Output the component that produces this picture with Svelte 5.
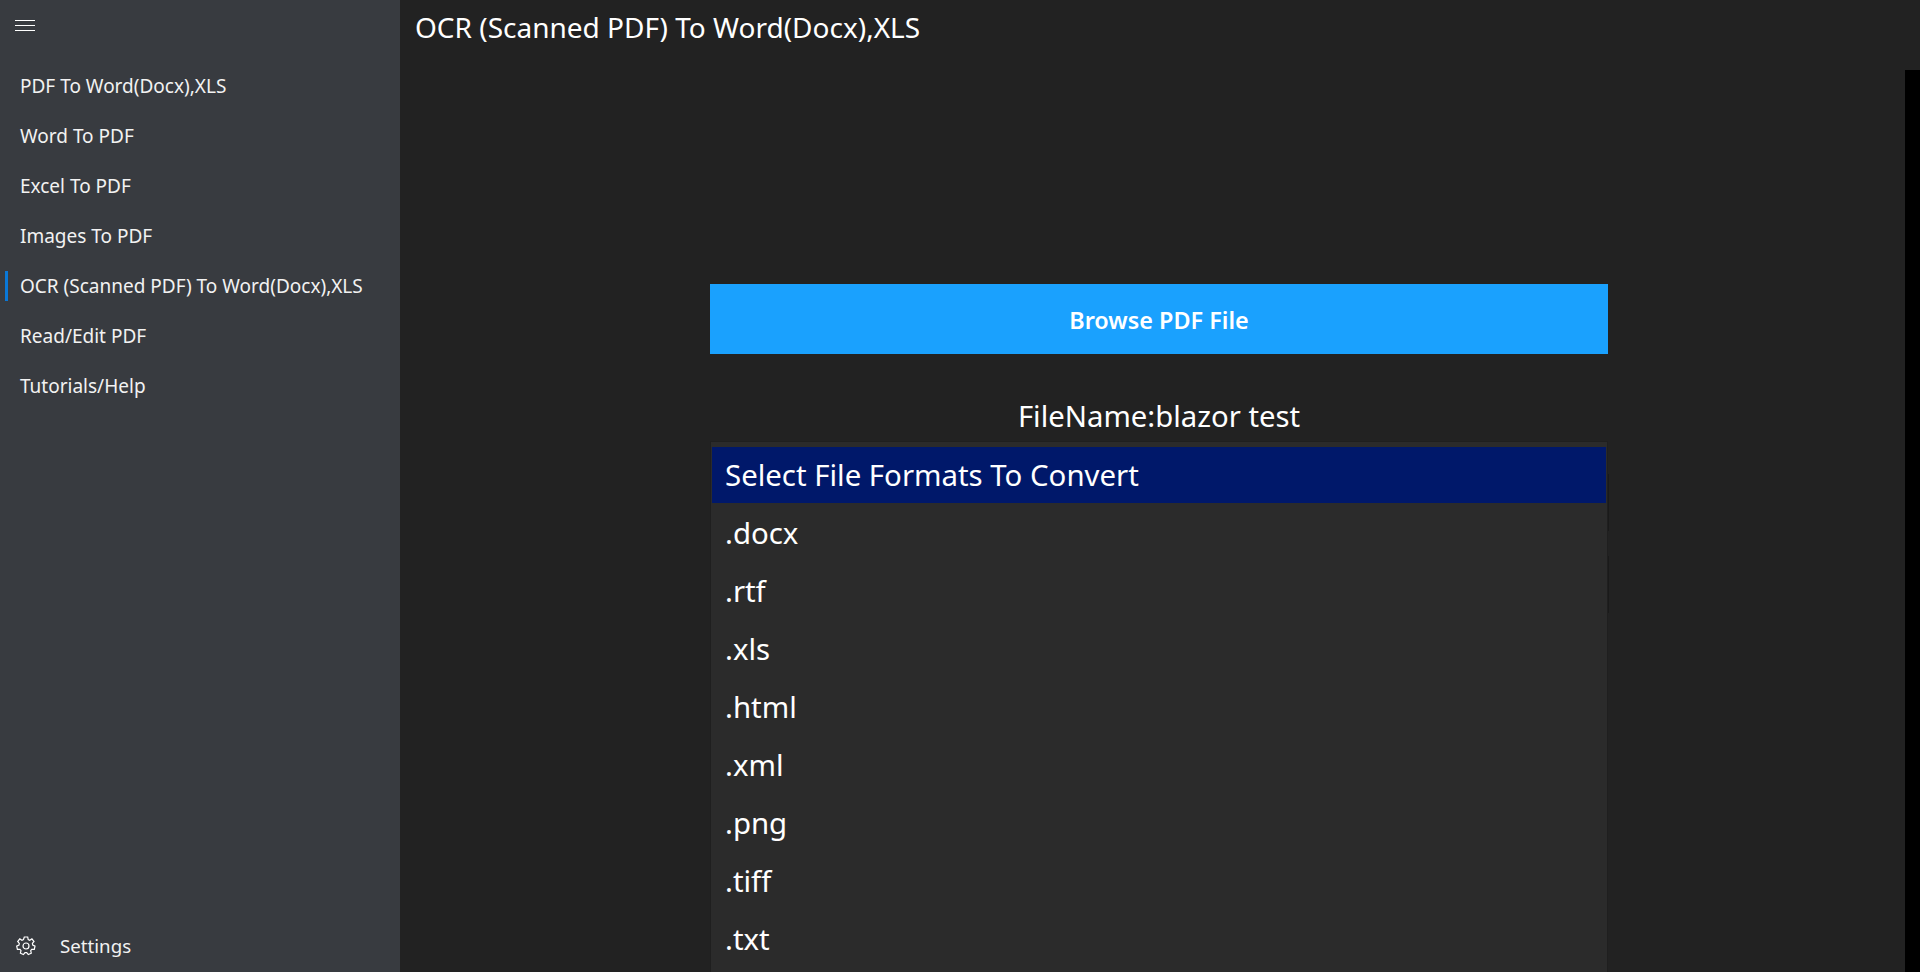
<script>
	const navItems = [
		'PDF To Word(Docx),XLS',
		'Word To PDF',
		'Excel To PDF',
		'Images To PDF',
		'OCR (Scanned PDF) To Word(Docx),XLS',
		'Read/Edit PDF',
		'Tutorials/Help'
	];
	const activeItem = 'OCR (Scanned PDF) To Word(Docx),XLS';
	const formats = ['.docx', '.rtf', '.xls', '.html', '.xml', '.png', '.tiff', '.txt'];
</script>

<div class="shell">
	<aside class="sidebar">
		<button class="menu-btn" aria-label="Menu">
			<span></span><span></span><span></span>
		</button>
		<nav class="nav">
			{#each navItems as item}
				<div class="nav-item" class:active={item === activeItem}>{item}</div>
			{/each}
		</nav>
		<div class="settings">
			<svg width="20" height="20" viewBox="0 0 20 20" fill="none" stroke="#fff" stroke-width="1.2">
				<circle cx="10" cy="10" r="3" />
				<path d="M8.3 1h3.4l.5 2.5 1.5.7 2.2-1.3 2.1 2.6-1.6 1.9.3 1.6 2.3 1.1-.7 3.2-2.6.1-1 1.3.6 2.5-3 1.4-1.6-2h-1.7l-1.6 2-3-1.4.6-2.5-1-1.3-2.6-.1-.7-3.2 2.3-1.1.3-1.6-1.6-1.9 2.1-2.6 2.2 1.3 1.5-.7z" />
			</svg>
			<span class="settings-label">Settings</span>
		</div>
	</aside>

	<main class="main">
		<header class="title">OCR (Scanned PDF) To Word(Docx),XLS</header>
		<div class="body">
			<div class="content">
				<button class="browse">Browse PDF File</button>
				<div class="filename">FileName:blazor test</div>
				<div class="panel">
					<div class="row selected">Select File Formats To Convert</div>
					{#each formats as f}
						<div class="row">{f}</div>
					{/each}
				</div>
			</div>
			<div class="scrollbar"></div>
		</div>
	</main>
</div>

<style>
	:global(body) {
		margin: 0;
		overflow: hidden;
		background: #222222;
	}

	.shell {
		display: flex;
		height: 972px;
		overflow: hidden;
		font-family: "Noto Sans", "Open Sans", sans-serif;
		color: #fff;
	}

	.sidebar {
		width: 400px;
		flex: none;
		display: flex;
		flex-direction: column;
		background: #383b40;
	}

	.menu-btn {
		display: flex;
		flex-direction: column;
		gap: 4px;
		width: 20px;
		margin: 20px 0 0 15px;
		padding: 0;
		border: none;
		background: none;
	}

	.menu-btn span {
		display: block;
		height: 1px;
		background: #fff;
	}

	.nav {
		margin-top: 30px;
		flex: 1;
	}

	.nav-item {
		position: relative;
		height: 50px;
		line-height: 50px;
		padding-left: 20px;
		font-size: 19px;
		color: #f2f2f2;
		white-space: nowrap;
	}

	.nav-item.active::before {
		content: '';
		position: absolute;
		left: 5px;
		top: 10px;
		width: 3px;
		height: 30px;
		background: #0a78d7;
	}

	.settings {
		display: flex;
		align-items: center;
		gap: 24px;
		height: 50px;
		padding-left: 16px;
		margin-bottom: 1px;
		font-size: 18.7px;
		color: #f2f2f2;
	}

	.settings-label {
		padding-bottom: 2px;
	}

	.main {
		flex: 1;
		min-width: 0;
		display: flex;
		flex-direction: column;
	}

	.title {
		height: 54px;
		line-height: 54px;
		padding-left: 15px;
		font-size: 28px;
		white-space: nowrap;
	}

	.body {
		flex: 1;
		display: flex;
		min-height: 0;
		padding-top: 16px;
	}

	.content {
		flex: 1;
		display: flex;
		flex-direction: column;
		padding: 214px 297px 0 310px;
		min-width: 0;
	}

	.scrollbar {
		width: 15px;
		flex: none;
		background: #000;
	}

	.browse {
		display: block;
		flex: none;
		width: 100%;
		height: 70px;
		padding: 2px 0 0;
		border: none;
		background: #1aa1fe;
		color: #fff;
		font-family: inherit;
		font-size: 23.4px;
		font-weight: 600;
	}

	.filename {
		flex: none;
		height: 87px;
		padding-top: 42px;
		box-sizing: border-box;
		line-height: 40px;
		text-align: center;
		font-size: 29.3px;
	}

	.panel {
		position: relative;
		flex: 1;
		box-sizing: border-box;
		padding: 5px 1px 0;
		border: 1px solid #1f1f1f;
		border-bottom: none;
		background: #2b2b2b;
	}

	.panel::before,
	.panel::after {
		content: '';
		position: absolute;
		right: -2px;
		width: 1px;
		height: 57px;
		background: #1a1a1a;
	}

	.panel::before {
		top: 32px;
	}

	.panel::after {
		top: 114px;
	}

	.row {
		height: 58px;
		line-height: 58px;
		padding-left: 13px;
		font-size: 29.4px;
		white-space: nowrap;
	}

	.row.selected {
		height: 56px;
		line-height: 56px;
		margin-bottom: 1px;
		background: #00186a;
	}
</style>
